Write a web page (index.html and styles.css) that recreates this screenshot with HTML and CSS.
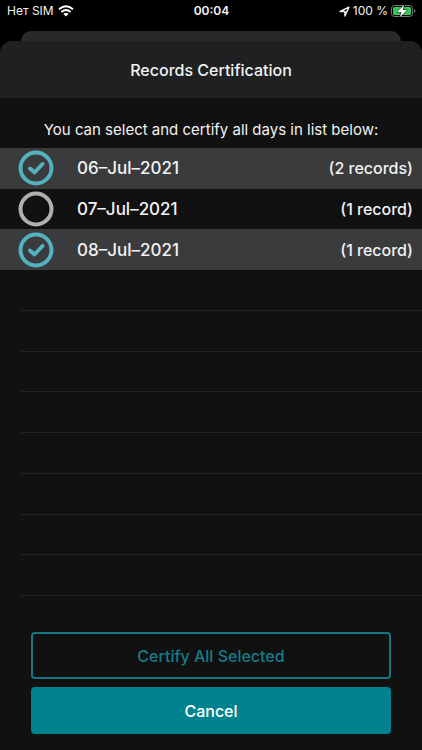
FILE: index.html
```html
<!DOCTYPE html>
<html lang="en">
<head>
<meta charset="utf-8">
<meta name="viewport" content="width=device-width, initial-scale=1">
<title>Records Certification</title>
<link rel="stylesheet" href="styles.css">
</head>
<body>
<div class="status-bar">
  <div class="status-left">
    <span>Нет SIM</span>
    <svg class="wifi" viewBox="0 0 16 12" aria-hidden="true">
      <path d="M1 4.300Q8-1.900 15 4.300" />
      <path d="M3.400 6.900Q8 3 12.600 6.900" />
      <path class="wifi-dot" d="M5.400 8.900Q8 6.800 10.600 8.900L8 11.600Z" />
    </svg>
  </div>
  <span class="clock">00:04</span>
  <div class="status-right">
    <svg class="location" viewBox="0 0 10 10" aria-hidden="true"><path d="M1 5 9 1 5.400 9V5Z" /></svg>
    <span>100 %</span>
    <svg class="battery" viewBox="0 0 25 14" aria-hidden="true">
      <rect class="battery-case" x=".5" y="1.500" width="21" height="11" rx="3" />
      <rect class="battery-fill" x="2" y="3" width="18" height="8" rx="1.500" />
      <path class="battery-cap" d="M23 5q1.500.4 1.500 2T23 9Z" />
      <path class="battery-bolt" d="M13.200.8 6 7.900h4.300L8.800 13.200l7.400-7.100h-4.400Z" />
    </svg>
  </div>
</div>
<div class="back-sheet"></div>
<main class="sheet">
  <header class="sheet-header"><h1>Records Certification</h1></header>
  <p class="intro">You can select and certify all days in list below:</p>
  <ul class="days">
    <li><label class="day"><input type="checkbox" checked><svg class="mark" viewBox="0 0 36 36" aria-hidden="true"><circle cx="18" cy="18" r="15.500" /><path d="m12 18.500 4.500 4L24.500 14" /></svg><span class="date">06–Jul–2021</span><span class="count">(2 records)</span></label></li>
    <li><label class="day"><input type="checkbox"><svg class="mark" viewBox="0 0 36 36" aria-hidden="true"><circle cx="18" cy="18" r="15.500" /><path d="m12 18.500 4.500 4L24.500 14" /></svg><span class="date">07–Jul–2021</span><span class="count">(1 record)</span></label></li>
    <li><label class="day"><input type="checkbox" checked><svg class="mark" viewBox="0 0 36 36" aria-hidden="true"><circle cx="18" cy="18" r="15.500" /><path d="m12 18.500 4.500 4L24.500 14" /></svg><span class="date">08–Jul–2021</span><span class="count">(1 record)</span></label></li>
    <li class="empty"></li>
    <li class="empty"></li>
    <li class="empty"></li>
    <li class="empty"></li>
    <li class="empty"></li>
    <li class="empty"></li>
    <li class="empty"></li>
    <li class="empty"></li>
  </ul>
  <footer class="actions">
    <button type="button" class="btn btn-outline">Certify All Selected</button>
    <button type="button" class="btn btn-solid">Cancel</button>
  </footer>
</main>
</body>
</html>
```
FILE: styles.css
```css
* {
  box-sizing: border-box;
}

body {
  display: flex;
  flex-direction: column;
  min-height: 100vh;
  margin: 0;
  background: #000;
  color: #f2f2f2;
  font-family: Inter, "Liberation Sans", sans-serif;
  font-size: 16px;
}

.status-bar {
  display: grid;
  grid-template-columns: 1fr auto 1fr;
  align-items: center;
  height: 31px;
  padding: 0 6px 9px 7px;
  font-size: 12px;
  line-height: 16px;
}

.status-left,
.status-right {
  display: flex;
  align-items: center;
  gap: 4px;
}

.status-right {
  justify-content: flex-end;
  gap: 3px;
}

.clock {
  font-weight: 600;
}

.wifi {
  width: 16px;
  height: 12px;
  fill: none;
  stroke: #fff;
  stroke-width: 2;
}

.wifi .wifi-dot {
  fill: #fff;
  stroke: none;
}

.location {
  width: 11px;
  height: 11px;
  fill: none;
  stroke: #eee;
  stroke-width: 1.3;
  stroke-linejoin: round;
}

.battery {
  width: 25px;
  height: 14px;
}

.battery-case {
  fill: none;
  stroke: #777;
}

.battery-fill {
  fill: #34c759;
}

.battery-cap {
  fill: #777;
}

.battery-bolt {
  fill: #fff;
  stroke: #000;
  stroke-width: 1;
  paint-order: stroke;
}

.back-sheet {
  height: 10px;
  margin: 0 21px;
  border-radius: 10px 10px 0 0;
  background: #28292b;
}

.sheet {
  display: flex;
  flex: 1;
  flex-direction: column;
  overflow: hidden;
  border-radius: 12px 12px 0 0;
  background: #111;
}

.sheet-header {
  display: flex;
  align-items: center;
  justify-content: center;
  height: 57px;
  background: #1f2022;
}

h1 {
  margin: 0;
  font-size: 16px;
  font-weight: 500;
}

.intro {
  margin: 0;
  padding: 22px 8px 8px;
  font-size: 15px;
  line-height: 20px;
  text-align: center;
}

.days {
  display: grid;
  flex: 1;
  grid-auto-rows: 1fr;
  margin: 0;
  padding: 0;
  list-style: none;
}

.day {
  position: relative;
  display: flex;
  align-items: center;
  height: 100%;
  padding: 0 9px 0 18px;
  font-size: 17px;
  font-weight: 500;
}

.day:has(:checked) {
  background: #3a3b3d;
}

.day input {
  position: absolute;
  width: 36px;
  height: 36px;
  margin: 0;
  opacity: 0;
}

.mark {
  width: 36px;
  height: 36px;
  margin-right: 23px;
  fill: none;
  stroke: #b0b0b0;
  stroke-width: 4;
  stroke-linecap: round;
  stroke-linejoin: round;
}

.mark path {
  display: none;
}

input:checked + .mark {
  stroke: #52b2bf;
}

input:checked + .mark path {
  display: inline;
}

.date {
  flex: 1;
}

.count {
  font-size: 16px;
}

.empty {
  margin-left: 21px;
  border-bottom: 1px solid #222325;
}

.actions {
  display: grid;
  gap: 8px;
  padding: 36px 31px 16px;
}

.btn {
  height: 47px;
  border: 2px solid #00838f;
  border-radius: 4px;
  font: 500 16px/20px Inter, "Liberation Sans", sans-serif;
}

.btn-outline {
  border-color: #167681;
  background: transparent;
  color: #167c87;
}

.btn-solid {
  background: #00838f;
  color: #fff;
}
```
